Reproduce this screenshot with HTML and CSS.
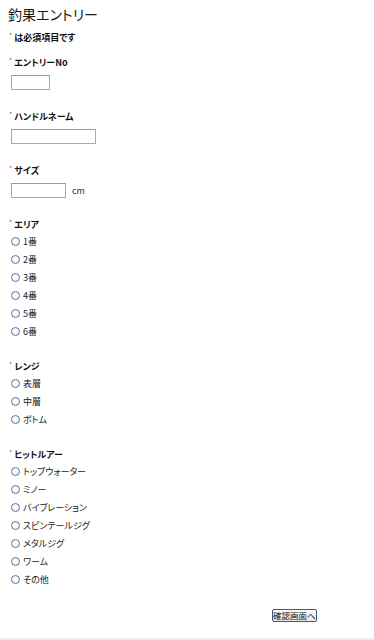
FILE: index.html
```html
<!DOCTYPE html>
<html lang="ja">
<head>
<meta charset="utf-8">
<title>釣果エントリー</title>
<link rel="stylesheet" href="styles.css">
</head>
<body>
<div class="page">
  <h1 class="title">釣果エントリー</h1>
  <p class="note"><span class="req">*</span>は必須項目です</p>

  <div class="field first">
    <div class="label"><span class="req">*</span>エントリーNo</div>
    <div class="input w-no"></div>
  </div>

  <div class="field">
    <div class="label"><span class="req">*</span>ハンドルネーム</div>
    <div class="input w-name"></div>
  </div>

  <div class="field">
    <div class="label"><span class="req">*</span>サイズ</div>
    <div class="inline">
      <div class="input w-size"></div>
      <span class="unit">cm</span>
    </div>
  </div>

  <div class="field">
    <div class="label"><span class="req">*</span>エリア</div>
    <ul class="radios">
      <li><span class="radio"></span>1番</li>
      <li><span class="radio"></span>2番</li>
      <li><span class="radio"></span>3番</li>
      <li><span class="radio"></span>4番</li>
      <li><span class="radio"></span>5番</li>
      <li><span class="radio"></span>6番</li>
    </ul>
  </div>

  <div class="field">
    <div class="label"><span class="req">*</span>レンジ</div>
    <ul class="radios">
      <li><span class="radio"></span>表層</li>
      <li><span class="radio"></span>中層</li>
      <li><span class="radio"></span>ボトム</li>
    </ul>
  </div>

  <div class="field">
    <div class="label"><span class="req">*</span>ヒットルアー</div>
    <ul class="radios">
      <li><span class="radio"></span>トップウォーター</li>
      <li><span class="radio"></span>ミノー</li>
      <li><span class="radio"></span>バイブレーション</li>
      <li><span class="radio"></span>スピンテールジグ</li>
      <li><span class="radio"></span>メタルジグ</li>
      <li><span class="radio"></span>ワーム</li>
      <li><span class="radio"></span>その他</li>
    </ul>
  </div>

  <div class="actions">
    <button class="btn" type="button">確認画面へ</button>
  </div>
</div>
<div class="footer"></div>
</body>
</html>
```
FILE: styles.css
```css
html, body {
  margin: 0;
  padding: 0;
  background: #fff;
}
body {
  font-family: "Noto Sans CJK JP", "Liberation Sans", sans-serif;
  font-feature-settings: "palt";
  font-size: 9px;
  color: #111;
}
.page {
  padding: 4px 8px 0 8px;
}
.title {
  margin: 2px 0 0 0;
  font-size: 14px;
  line-height: 16px;
  height: 16px;
  font-weight: normal;
  color: #1a1a1a;
}
.note {
  margin: 10px 0 0 0;
  line-height: 12px;
  height: 12px;
  font-weight: bold;
}
.req {
  color: #e8413c;
  font-size: 7px;
  line-height: 0;
  vertical-align: 3px;
  margin: 0 2px 0 1px;
  font-weight: normal;
}
.field {
  margin-top: 20px;
}
.field.first {
  margin-top: 12px;
}
.label {
  line-height: 13px;
  height: 12px;
  font-weight: bold;
}
.input {
  margin: 7px 0 0 3px;
  height: 13px;
  border: 1px solid #a9a9a9;
  border-top-color: #9a9a9a;
  background: #fff;
  box-sizing: content-box;
}
.w-no { width: 37px; }
.w-name { width: 83px; }
.w-size { width: 53px; }
.inline {
  display: flex;
  align-items: center;
}
.inline .input {
  flex: none;
}
.unit {
  margin: 7px 0 0 6px;
  color: #3a2a4a;
}
.radios {
  list-style: none;
  margin: 2px 0 0 0;
  padding: 0;
}
.radios li {
  height: 18px;
  display: flex;
  align-items: center;
  color: #222;
}
.radio {
  box-sizing: border-box;
  width: 9px;
  height: 9px;
  margin: 0 3px 0 3px;
  border-radius: 50%;
  border: 1px solid #5a76a0;
  background: radial-gradient(circle at 40% 40%, #ffffff 0%, #e8eef5 100%);
  flex: none;
}
.actions {
  margin-top: 21px;
  padding-left: 264px;
  height: 13px;
}
.btn {
  display: block;
  box-sizing: border-box;
  height: 13px;
  padding: 0;
  margin: 0;
  border: 1px solid #3d5a80;
  border-radius: 2px;
  background: linear-gradient(#fbfbfb, #e9e9e9);
  font-family: "Noto Sans CJK JP", sans-serif;
  font-feature-settings: "palt";
  font-size: 8.5px;
  line-height: 11px;
  color: #111;
  white-space: nowrap;
}
.footer {
  margin-top: 16px;
  height: 6px;
  background: #ececec;
}
```
